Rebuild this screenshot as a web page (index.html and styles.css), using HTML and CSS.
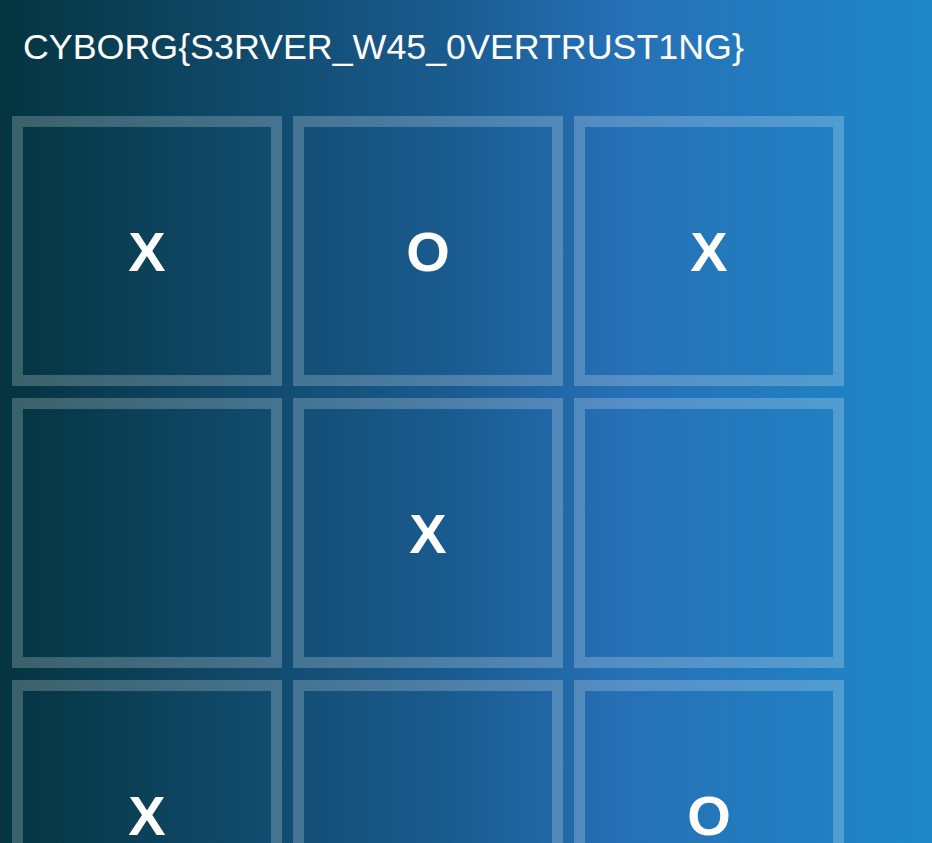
FILE: index.html
```html
<!DOCTYPE html>
<html lang="en">
<head>
<meta charset="utf-8">
<title>Tic Tac Toe</title>
<link rel="stylesheet" href="styles.css">
</head>
<body>
<main class="page">
  <h1 class="flag">CYBORG{S3RVER_W45_0VERTRUST1NG}</h1>
  <div class="board">
    <div class="cell">X</div>
    <div class="cell">O</div>
    <div class="cell">X</div>
    <div class="cell"></div>
    <div class="cell">X</div>
    <div class="cell"></div>
    <div class="cell">X</div>
    <div class="cell"></div>
    <div class="cell">O</div>
  </div>
</main>
</body>
</html>
```

FILE: styles.css
```css
html, body {
  margin: 0;
  padding: 0;
  height: 100%;
}
body {
  background: linear-gradient(to right, #04343f 0%, #1a5b8f 48%, #2670b6 67%, #1e88c8 100%);
  font-family: "Liberation Sans", Arial, sans-serif;
  color: #ffffff;
  overflow: hidden;
}
.page {
  padding: 27px 0 0 12px;
}
.flag {
  margin: 0 0 0 11px;
  font-size: 35.8px;
  font-weight: normal;
  line-height: 41px;
}
.board {
  margin-top: 48px;
  display: grid;
  grid-template-columns: repeat(3, 270px);
  grid-auto-rows: 270px;
  column-gap: 11px;
  row-gap: 12px;
}
.cell {
  box-sizing: border-box;
  border: 11px solid rgba(255, 255, 255, 0.22);
  display: flex;
  align-items: center;
  justify-content: center;
  font-size: 56px;
  font-weight: bold;
}
```
